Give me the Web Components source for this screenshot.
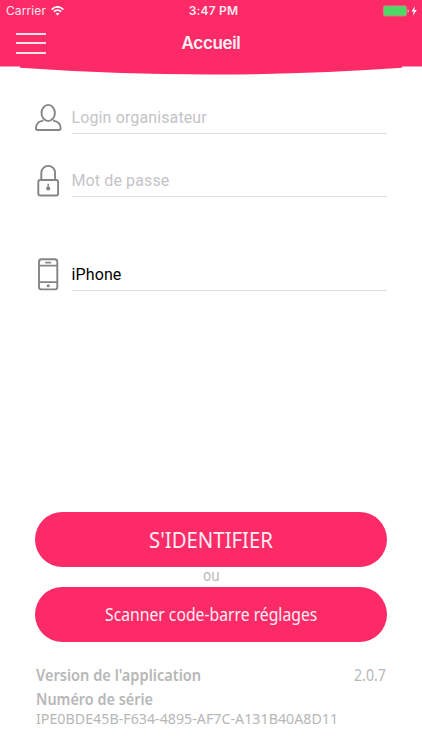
<!DOCTYPE html>
<html lang="fr">
<head>
<meta charset="utf-8">
<title>Accueil</title>
<style>
  html, body {
    margin: 0;
    height: 100%;
    background: #fff;
    overflow: hidden;
  }
</style>
</head>
<body>
<login-screen></login-screen>

<script>
class FitText extends HTMLElement {
  constructor() {
    super();
    this.attachShadow({ mode: 'open' });
    this.shadowRoot.innerHTML = `
      <style>
        :host {
          display: block;
          white-space: nowrap;
          font-family: "Noto Sans", "Open Sans", sans-serif;
        }
        span {
          display: inline-block;
          transform-origin: 0 50%;
        }
      </style>
      <span><slot></slot></span>
    `;
  }

  connectedCallback() {
    const width = Number(this.getAttribute('width'));
    this.style.width = width + 'px';
    const fit = () => {
      const span = this.shadowRoot.querySelector('span');
      if (span.offsetWidth) {
        span.style.transform = `scaleX(${width / span.offsetWidth})`;
      }
    };
    requestAnimationFrame(fit);
    document.fonts.ready.then(fit);
  }
}
customElements.define('fit-text', FitText);

class StatusBar extends HTMLElement {
  constructor() {
    super();
    this.attachShadow({ mode: 'open' });
    this.shadowRoot.innerHTML = `
      <style>
        :host {
          display: grid;
          grid-template-columns: 1fr auto 1fr;
          align-items: center;
          height: 22px;
          padding: 0 5px 0 6px;
          font: 12px/22px Inter, sans-serif;
          color: #ffe6ee;
        }
        .left, .right {
          display: flex;
          align-items: center;
        }
        .left { gap: 4.5px; letter-spacing: 0.1px; }
        .right { justify-content: flex-end; }
        .time { font-weight: 600; letter-spacing: 0.22px; padding-left: 4px; }
        svg { display: block; }
      </style>
      <div class="left">
        <span>Carrier</span>
        <svg width="13" height="10" viewBox="0 0 13 10" fill="none" stroke="#fff" stroke-width="1.7">
          <path d="M.7 3.6C4-.1 9-.1 12.3 3.6M2.9 5.8c2-2.2 5.2-2.2 7.2 0"/>
          <path d="M4.5 7.5c1.2-1.1 2.8-1.1 4 0l-2 2z" fill="#fff" stroke="none"/>
        </svg>
      </div>
      <span class="time">3:47 PM</span>
      <div class="right">
        <svg width="36" height="12" viewBox="0 0 36 12">
          <rect x="2.5" y=".9" width="23" height="10" rx="1.5" fill="#4cd964" stroke="#c58b82"/>
          <path d="M26.6 4.2c1.7.3 1.7 3.2 0 3.5z" fill="#ffc4d5"/>
          <path d="M34 1 30.5 6.5h2.2L31.8 10.8l4-5.8h-2.4z" fill="#fff"/>
        </svg>
      </div>
    `;
  }
}
customElements.define('status-bar', StatusBar);

class AppHeader extends HTMLElement {
  constructor() {
    super();
    this.attachShadow({ mode: 'open' });
    this.shadowRoot.innerHTML = `
      <style>
        :host { display: block; height: 75px; }
        .top { height: 66px; background: #fc2b68; }
        nav {
          display: grid;
          grid-template-columns: 1fr auto 1fr;
          height: 44px;
          padding: 0 16px;
        }
        .burger {
          display: flex;
          flex-direction: column;
          justify-content: space-between;
          width: 30px;
          height: 21px;
          padding-top: 10.5px;
        }
        .burger i { height: 2px; background: #ffe0ea; }
        h1 {
          margin: 0;
          font: 600 17px/42px Inter, sans-serif;
          letter-spacing: -0.35px;
          color: #fff1f5;
        }
        .curve { display: block; }
      </style>
      <div class="top">
        <status-bar></status-bar>
        <nav>
          <div class="burger"><i></i><i></i><i></i></div>
          <h1><slot></slot></h1>
        </nav>
      </div>
      <svg class="curve" width="422" height="9" viewBox="0 0 422 9">
        <path d="M0 0H422V.4H402V1.8Q211 15.2 20 1.8V.4H0z" fill="#fc2b68"/>
      </svg>
    `;
  }
}
customElements.define('app-header', AppHeader);

class FormField extends HTMLElement {
  constructor() {
    super();
    this.attachShadow({ mode: 'open' });
    this.shadowRoot.innerHTML = `
      <style>
        :host {
          display: flex;
          height: 34px;
          font: 16px/36px Roboto, sans-serif;
          color: #c4c4c8;
        }
        :host([filled]) { color: #000; }
        .icon { width: 36.5px; }
        .value {
          flex: 1;
          height: 33px;
          border-bottom: 1px solid #dedede;
          letter-spacing: 0.12px;
        }
        ::slotted(svg) { display: block; overflow: visible; }
      </style>
      <div class="icon"><slot name="icon"></slot></div>
      <div class="value"><slot></slot></div>
    `;
  }
}
customElements.define('form-field', FormField);

class PillButton extends HTMLElement {
  constructor() {
    super();
    this.attachShadow({ mode: 'open' });
    this.shadowRoot.innerHTML = `
      <style>
        :host { display: block; }
        button {
          display: flex;
          align-items: center;
          justify-content: center;
          width: 100%;
          height: 55px;
          padding: 0 0 var(--lift, 0);
          border: 0;
          border-radius: 28px;
          background: #fc2b68;
          color: #ffecf2;
          font-size: var(--size, 17.5px);
        }
      </style>
      <button type="button"><slot></slot></button>
    `;
  }
}
customElements.define('pill-button', PillButton);

class LoginScreen extends HTMLElement {
  constructor() {
    super();
    this.attachShadow({ mode: 'open' });
    this.shadowRoot.innerHTML = `
      <style>
        :host {
          display: flex;
          flex-direction: column;
          width: 422px;
          height: 750px;
          background: #fff;
        }
        .fields {
          display: flex;
          flex-direction: column;
          padding: 25px 35px 0;
        }
        .fields svg {
          fill: none;
          stroke: #858585;
          stroke-width: 1.9;
          stroke-linejoin: round;
        }
        .password { margin-top: 29px; }
        .device { margin-top: 59.5px; }
        .actions {
          display: flex;
          flex-direction: column;
          margin-top: 221px;
          padding: 0 35px;
        }
        .or {
          align-self: center;
          height: 20px;
          font-size: 16px;
          line-height: 17px;
          color: #b6b6b6;
        }
        .first { --size: 22px; --lift: 1px; }
        footer {
          padding: 23px 36px 0;
          color: #b7b7b7;
          font-size: 15.5px;
          line-height: 20px;
        }
        .row {
          display: flex;
          justify-content: space-between;
        }
        .bold { font-weight: 600; font-size: 16px; }
        .serial { margin-top: 5px; line-height: 19px; }
        .number { font-size: 15px; line-height: 19px; }
      </style>
      <app-header>Accueil</app-header>
      <div class="fields">
        <form-field>
          <svg slot="icon" width="28" height="34">
            <ellipse cx="13.2" cy="13" rx="6.7" ry="8.1"/>
            <path d="M8.3 20.6C3 21.3 1 23.8 1 28.3c0 1.1.6 1.7 1.7 1.7h21.2c1.1 0 1.7-.6 1.7-1.7 0-4.5-2.2-7-7.5-7.7"/>
          </svg>
          Login organisateur
        </form-field>
        <form-field class="password">
          <svg slot="icon" width="28" height="34">
            <rect x="3.3" y="17" width="19.8" height="15.5" rx="2"/>
            <path d="M6.3 17V9.8a6.9 6.9 0 0 1 13.8 0V17"/>
            <path d="M13.2 20.8v4" stroke-width="1.5"/>
            <circle cx="13.2" cy="25.5" r="2.1" fill="#858585" stroke="none"/>
          </svg>
          Mot de passe
        </form-field>
        <form-field class="device" filled>
          <svg slot="icon" width="28" height="34">
            <rect x="4" y="2.2" width="18.3" height="30.2" rx="2.5"/>
            <path d="M4 8.6h18.3M4 25.1h18.3" stroke-width="1.6"/>
            <path d="M10.3 5.6h5.8" stroke-width="1.7"/>
            <circle cx="13.2" cy="28.8" r="1.5" fill="#858585" stroke="none"/>
          </svg>
          iPhone
        </form-field>
      </div>
      <div class="actions">
        <pill-button class="first"><fit-text width="124">S'IDENTIFIER</fit-text></pill-button>
        <fit-text class="or" width="17">ou</fit-text>
        <pill-button><fit-text width="212">Scanner code-barre réglages</fit-text></pill-button>
      </div>
      <footer>
        <div class="row">
          <fit-text class="bold" width="165">Version de l'application</fit-text>
          <fit-text width="32">2.0.7</fit-text>
        </div>
        <fit-text class="bold serial" width="117">Numéro de série</fit-text>
        <fit-text class="number" width="302">IPE0BDE45B-F634-4895-AF7C-A131B40A8D11</fit-text>
      </footer>
    `;
  }
}
customElements.define('login-screen', LoginScreen);
</script>
</body>
</html>
